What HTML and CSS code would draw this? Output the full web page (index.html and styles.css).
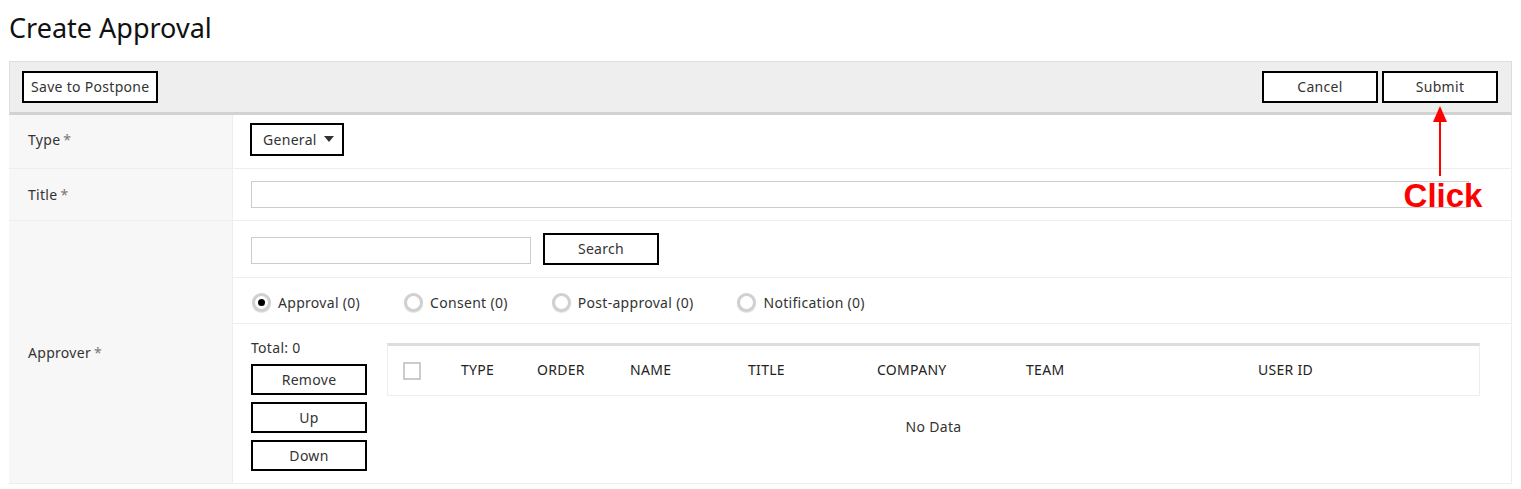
FILE: index.html
```html
<!DOCTYPE html>
<html>
<head>
<meta charset="utf-8">
<link rel="stylesheet" href="styles.css">
</head>
<body>
<div class="page">
  <h1 class="page-title">Create Approval</h1>
  <div class="toolbar">
    <button class="btn btn-save">Save to Postpone</button>
    <div class="toolbar-right">
      <button class="btn btn-wide">Cancel</button>
      <button class="btn btn-wide">Submit</button>
    </div>
  </div>
  <div class="form">
    <div class="row row-type">
      <div class="label">Type <span class="req">*</span></div>
      <div class="field">
        <div class="select">General <span class="caret"></span></div>
      </div>
    </div>
    <div class="row row-title">
      <div class="label">Title <span class="req">*</span></div>
      <div class="field">
        <div class="input input-title"></div>
      </div>
    </div>
    <div class="row row-approver">
      <div class="label">Approver <span class="req">*</span></div>
      <div class="field field-stack">
        <div class="sub sub-search">
          <div class="input input-search"></div>
          <button class="btn btn-search">Search</button>
        </div>
        <div class="sub sub-radios">
          <label class="radio checked"><span class="dot"></span>Approval (0)</label>
          <label class="radio"><span class="dot"></span>Consent (0)</label>
          <label class="radio"><span class="dot"></span>Post-approval (0)</label>
          <label class="radio"><span class="dot"></span>Notification (0)</label>
        </div>
        <div class="sub sub-list">
          <div class="list-actions">
            <div class="total">Total: 0</div>
            <button class="btn btn-act">Remove</button>
            <button class="btn btn-act">Up</button>
            <button class="btn btn-act">Down</button>
          </div>
          <div class="grid">
            <div class="grid-head">
              <span class="col col-check"><span class="checkbox"></span></span>
              <span class="col col-type">TYPE</span>
              <span class="col col-order">ORDER</span>
              <span class="col col-name">NAME</span>
              <span class="col col-title">TITLE</span>
              <span class="col col-company">COMPANY</span>
              <span class="col col-team">TEAM</span>
              <span class="col col-user">USER ID</span>
            </div>
            <div class="grid-empty">No Data</div>
          </div>
        </div>
      </div>
    </div>
  </div>
  <div class="callout">
    <svg class="callout-arrow" width="16" height="72" viewBox="0 0 16 72">
      <polygon points="8,0 1,16 15,16" fill="#ff0000"/>
      <rect x="7" y="14" width="2" height="56" fill="#ff0000"/>
    </svg>
    <div class="callout-text">Click</div>
  </div>
</div>
</body>
</html>
```
FILE: styles.css
```css
* { box-sizing: border-box; }
html, body { margin: 0; padding: 0; background: #fff; }
body {
  font-family: "Noto Sans", "Open Sans", "Liberation Sans", sans-serif;
  font-size: 14px;
  letter-spacing: 0.3px;
  color: #333;
}
.page {
  position: relative;
  padding: 0 9px;
}
.page-title {
  margin: 0;
  height: 61px;
  padding-top: 8px;
  font-size: 27px;
  line-height: 40px;
  font-weight: normal;
  color: #111;
  letter-spacing: 0;
}
.btn {
  font-family: inherit;
  font-size: 14px;
  letter-spacing: 0.3px;
  color: #333;
  background: #fff;
  border: 2px solid #000;
  border-radius: 0;
  padding: 0;
  margin: 0;
  height: 32px;
  line-height: 28px;
  cursor: pointer;
}
.toolbar {
  display: flex;
  justify-content: space-between;
  align-items: center;
  background: #eee;
  border: 1px solid #ddd;
  border-bottom: 3px solid #d2d2d2;
  padding: 9px 13px 9px 12px;
}
.btn-save { padding: 0 7px; }
.toolbar-right { display: flex; gap: 4px; }
.btn-wide { width: 116px; }

.form {
  border-right: 1px solid #eee;
}
.row {
  display: flex;
  border-bottom: 1px solid #eee;
}
.label {
  width: 224px;
  flex: none;
  background: #f7f7f7;
  border-right: 1px solid #eee;
  padding-left: 19px;
  display: flex;
  align-items: center;
  color: #333;
}
.req { color: #777; margin-left: 3px; }
.field {
  flex: 1;
  padding: 0 18px;
  display: flex;
  align-items: center;
}
.row-type { height: 54px; }
.row-type .label { padding-bottom: 4px; }
.row-type .field { padding-bottom: 5px; padding-left: 17px; }
.select {
  height: 33px;
  border: 2px solid #000;
  padding: 0 8px 0 11px;
  display: flex;
  align-items: center;
  gap: 7px;
  color: #333;
}
.caret {
  width: 0; height: 0;
  border-left: 5px solid transparent;
  border-right: 5px solid transparent;
  border-top: 6px solid #333;
}
.row-title { height: 52px; }
.row-title .label { padding-bottom: 1px; }
.input {
  border: 1px solid #ccc;
  background: #fff;
}
.input-title {
  width: 1218px;
  height: 27px;
}
.field-stack {
  flex-direction: column;
  align-items: stretch;
  padding: 0;
}
.sub {
  border-bottom: 1px solid #eee;
  display: flex;
  align-items: center;
  padding: 0 18px;
}
.sub:last-child { border-bottom: none; }
.sub-search { height: 57px; }
.input-search { width: 280px; height: 27px; margin-top: 2px; }
.btn-search { width: 116px; margin-left: 12px; }
.sub-radios { height: 46px; padding-left: 19px; padding-top: 3px; }
.radio {
  display: flex;
  align-items: center;
  margin-right: 44px;
  color: #333;
}
.dot {
  width: 19px;
  height: 19px;
  border-radius: 50%;
  border: 3px solid #d0d0d0;
  background: #fff;
  margin-right: 7px;
  box-shadow: 0 1px 1px rgba(0,0,0,0.12);
  position: relative;
}
.radio.checked .dot::after {
  content: "";
  position: absolute;
  left: 3px; top: 3px;
  width: 7px; height: 7px;
  border-radius: 50%;
  background: #000;
}
.sub-list {
  height: 159px;
  align-items: flex-start;
  padding-top: 14px;
}
.list-actions {
  width: 116px;
  display: flex;
  flex-direction: column;
  gap: 7px;
}
.total {
  line-height: 18px;
  margin-top: 1px;
  margin-bottom: 0;
}
.btn-act { width: 116px; height: 31px; line-height: 27px; }
.grid {
  margin-left: 20px;
  width: 1093px;
  margin-top: 5px;
}
.grid-head {
  height: 53px;
  border: 1px solid #eee;
  border-top: 3px solid #ddd;
  display: flex;
  align-items: center;
  color: #222;
  padding-bottom: 2px;
}
.col { flex: none; }
.col-check { width: 73px; padding-left: 15px; display: flex; padding-top: 2px; }
.checkbox {
  width: 18px; height: 18px;
  border: 2px solid #ccc;
  background: #fff;
}
.col-type { width: 76px; }
.col-order { width: 93px; }
.col-name { width: 118px; }
.col-title { width: 129px; }
.col-company { width: 149px; }
.col-team { width: 232px; }
.grid-empty {
  text-align: center;
  padding-top: 21px;
  color: #333;
}
.callout {
  position: absolute;
  left: 1403px;
  top: 106px;
  width: 80px;
  display: flex;
  flex-direction: column;
  align-items: center;
}
.callout-arrow { display: block; margin-right: 6px; }
.callout-text {
  font-family: "Liberation Sans", Arial, sans-serif;
  font-weight: bold;
  font-size: 33px;
  line-height: 32px;
  letter-spacing: 0;
  color: #ff0000;
  margin-top: 2px;
}
```
